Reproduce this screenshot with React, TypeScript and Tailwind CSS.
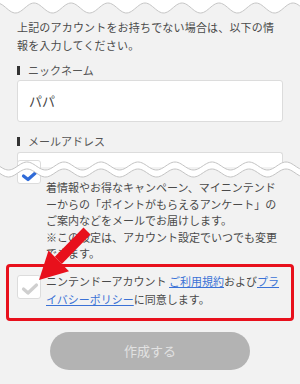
import React from 'react';

// wavy line used for the torn-page edges
function wave(y0: number, amp: number, phase: number, period = 37, w = 300) {
  const pts: string[] = [];
  for (let x = -2; x <= w + 2; x += 1.5) {
    const y = y0 - amp * Math.cos((2 * Math.PI * (x - phase)) / period);
    pts.push(`${x.toFixed(1)} ${y.toFixed(2)}`);
  }
  return pts;
}

function TopEdge() {
  const pts = wave(8, 5, -3);
  const line = 'M' + pts.join(' L');
  return (
    <svg className="block" width={300} height={16} viewBox="0 0 300 16">
      <path d={line + ' L302 -1 L-2 -1 Z'} fill="#ffffff" />
      <path d={line} fill="none" stroke="#c6c6c6" strokeWidth={1} />
    </svg>
  );
}

function Tear() {
  const upper = wave(10, 4, 27);
  const lower = wave(17, 4, 27);
  const band = 'M' + upper.join(' L') + ' L' + [...lower].reverse().join(' L') + ' Z';
  return (
    <svg
      className="pointer-events-none absolute left-0 top-[156px]"
      width={300}
      height={26}
      viewBox="0 0 300 26"
    >
      <path d={band} fill="#ffffff" />
      <path d={'M' + upper.join(' L')} fill="none" stroke="#c4c4c4" strokeWidth={1} />
      <path d={'M' + lower.join(' L')} fill="none" stroke="#c4c4c4" strokeWidth={1} />
    </svg>
  );
}

function Arrow() {
  // shaft from upper right down to the tip at the checkbox
  return (
    <svg
      className="pointer-events-none absolute inset-0"
      width={300}
      height={384}
      viewBox="0 0 300 384"
    >
      <polygon points="90.5,234.6 83.5,227.4 54.8,256.8 61.8,264" fill="#e8101c" />
      <polygon points="39,280 48.5,250.5 69,271.3" fill="#e8101c" />
    </svg>
  );
}

function FieldLabel({ children, className }: { children: React.ReactNode; className?: string }) {
  return (
    <div className={`flex h-[16px] items-center gap-[8px] text-[11px] text-[#555] ${className ?? ''}`}>
      <span className="h-[9px] w-[3px] bg-[#333]" />
      {children}
    </div>
  );
}

function Check({ color, low }: { color: string; low?: boolean }) {
  return (
    <svg width={24} height={24} viewBox="0 0 24 24" className="block">
      <path
        d={low ? 'M5.5 15 L10 18.5 L18.5 11' : 'M5.5 13 L10 17 L18.5 9'}
        fill="none"
        stroke={color}
        strokeWidth={3.2}
        strokeLinecap="round"
        strokeLinejoin="round"
      />
    </svg>
  );
}

export default function App() {
  return (
    <div className="relative h-[384px] w-[300px] overflow-hidden bg-[#f2f2f2] font-['Noto_Sans_CJK_JP','Noto_Sans',sans-serif] text-[#4a4a4a]">
      <TopEdge />

      {/* form fields */}
      <div className="px-[17px]">
        <p className="pt-[2px] text-[11px] leading-[18px] tracking-[0.18px]">
          上記のアカウントをお持ちでない場合は、以下の情
          <br />
          報を入力してください。
        </p>
        <FieldLabel className="mt-[8px]">ニックネーム</FieldLabel>
        <div className="mt-[2px] flex h-[42px] items-center rounded-[3px] border border-[#dcdcdc] bg-white pl-[11px] text-[13px] text-[#444]">
          パパ
        </div>
        <FieldLabel className="mt-[11px]">メールアドレス</FieldLabel>
        <div className="mt-[3px] h-[15px] rounded-t-[3px] border border-b-0 border-[#dcdcdc] bg-white" />
      </div>

      {/* newsletter checkbox (torn) */}
      <div className="flex gap-[5px] px-[17px]">
        <div className="-mt-[7px] h-[24px] w-[24px] shrink-0 rounded-[3px] border border-[#dcdcdc] bg-white">
          <Check color="#2f6bd8" low />
        </div>
        <p className="pt-[12px] text-[11px] leading-[16.5px]">
          着情報やお得なキャンペーン、マイニンテンド
          <br />
          ーからの「ポイントがもらえるアンケート」の
          <br />
          ご案内などをメールでお届けします。
          <br />
          ※この設定は、アカウント設定でいつでも変更
          <br />
          できます。
        </p>
      </div>

      {/* agreement */}
      <div className="mx-[6px] mt-[2px] flex items-start gap-[5px] rounded-[4px] border-[3px] border-[#e8101c] pb-[10px] pl-[8px] pr-[6px] pt-[5px]">
        <div className="mt-[3px] h-[24px] w-[24px] shrink-0 rounded-[3px] border border-[#dcdcdc] bg-white">
          <Check color="#cfcfcf" />
        </div>
        <p className="text-[11px] leading-[18px]">
          ニンテンドーアカウント <span className="text-[#3b72d6] underline">ご利用規約</span>および
          <span className="text-[#3b72d6] underline">プラ</span>
          <br />
          <span className="text-[#3b72d6] underline">イバシーポリシー</span>に同意します。
        </p>
      </div>

      <button
        type="button"
        className="mx-auto mt-[11px] flex h-[38px] w-[200px] items-center justify-center rounded-full bg-[#b3b3b3] text-[13px] text-[#e2e2e2]"
      >
        作成する
      </button>

      <Tear />
      <Arrow />
    </div>
  );
}
